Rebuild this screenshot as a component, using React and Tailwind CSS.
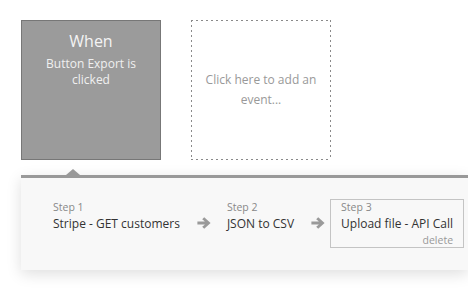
import React from 'react';

const steps = [
  { label: 'Step 1', title: 'Stripe - GET customers' },
  { label: 'Step 2', title: 'JSON to CSV' },
  { label: 'Step 3', title: 'Upload file - API Call', selected: true },
];

const Arrow = () => (
  <svg viewBox="0 0 14 12" className="w-[14px] h-[12px] mt-[18px] ml-[6px] mr-[5px] shrink-0">
    <path
      d="M7.2 0.3 L13.6 6 L7.2 11.7 L5.2 9.8 L7.9 7.4 H0.4 V4.6 H7.9 L5.2 2.2 Z"
      fill="#9a9a9a"
    />
  </svg>
);

const Step = ({ step }) => (
  <div
    className={`flex flex-col px-[10px] border ${
      step.selected ? 'border-[#c4c4c4]' : 'border-transparent'
    }`}
  >
    <span className="text-[10.5px] leading-[15px] text-[#888]">{step.label}</span>
    <span className="text-[12px] leading-[18px] text-[#333] whitespace-nowrap">{step.title}</span>
    {step.selected ? (
      <span className="text-[10.5px] leading-[14px] text-[#999] text-right">delete</span>
    ) : (
      <span className="h-[14px]" />
    )}
  </div>
);

export default function App() {
  return (
    <div
      className="w-[468px] h-[291px] bg-white overflow-hidden"
      style={{ fontFamily: '"Open Sans", "Liberation Sans", sans-serif' }}
    >
      <div className="flex gap-[30px] pt-[20px] pl-[21px]">
        <div className="w-[140px] h-[140px] bg-[#9b9b9b] border border-[#777] flex flex-col items-center pt-[9px] text-center">
          <span className="text-[16px] leading-[22px] text-[#f4f4f4]">When</span>
          <span className="text-[12px] leading-[16px] text-[#f0f0f0] mt-[4px] px-[16px]">
            Button Export is clicked
          </span>
        </div>
        <div className="w-[140px] h-[140px] bg-no-repeat [background-image:repeating-linear-gradient(90deg,#8a8a8a_0_2px,transparent_2px_5px),repeating-linear-gradient(90deg,#8a8a8a_0_2px,transparent_2px_5px),repeating-linear-gradient(180deg,#8a8a8a_0_2px,transparent_2px_5px),repeating-linear-gradient(180deg,#8a8a8a_0_2px,transparent_2px_5px)] [background-size:100%_1px,100%_1px,1px_100%,1px_100%] [background-position:0_0,0_100%,0_0,100%_0] flex items-center justify-center text-center px-[12px]">
          <span className="text-[12px] leading-[20px] text-[#999]">Click here to add an event...</span>
        </div>
      </div>

      <div className="relative mt-[15px] ml-[21px] h-[95px] bg-[#f8f8f8] border-t-[3px] border-[#999] shadow-[0_4px_14px_rgba(0,0,0,0.13)]">
        <div className="absolute left-[45px] top-[-9px] w-0 h-0 border-l-[7px] border-r-[7px] border-b-[6px] border-l-transparent border-r-transparent border-b-[#999]" />
        <div className="flex items-start pt-[21px] pl-[21px]">
          {steps.map((s, i) => (
            <React.Fragment key={s.label}>
              {i > 0 && <Arrow />}
              <Step step={s} />
            </React.Fragment>
          ))}
        </div>
      </div>
    </div>
  );
}
